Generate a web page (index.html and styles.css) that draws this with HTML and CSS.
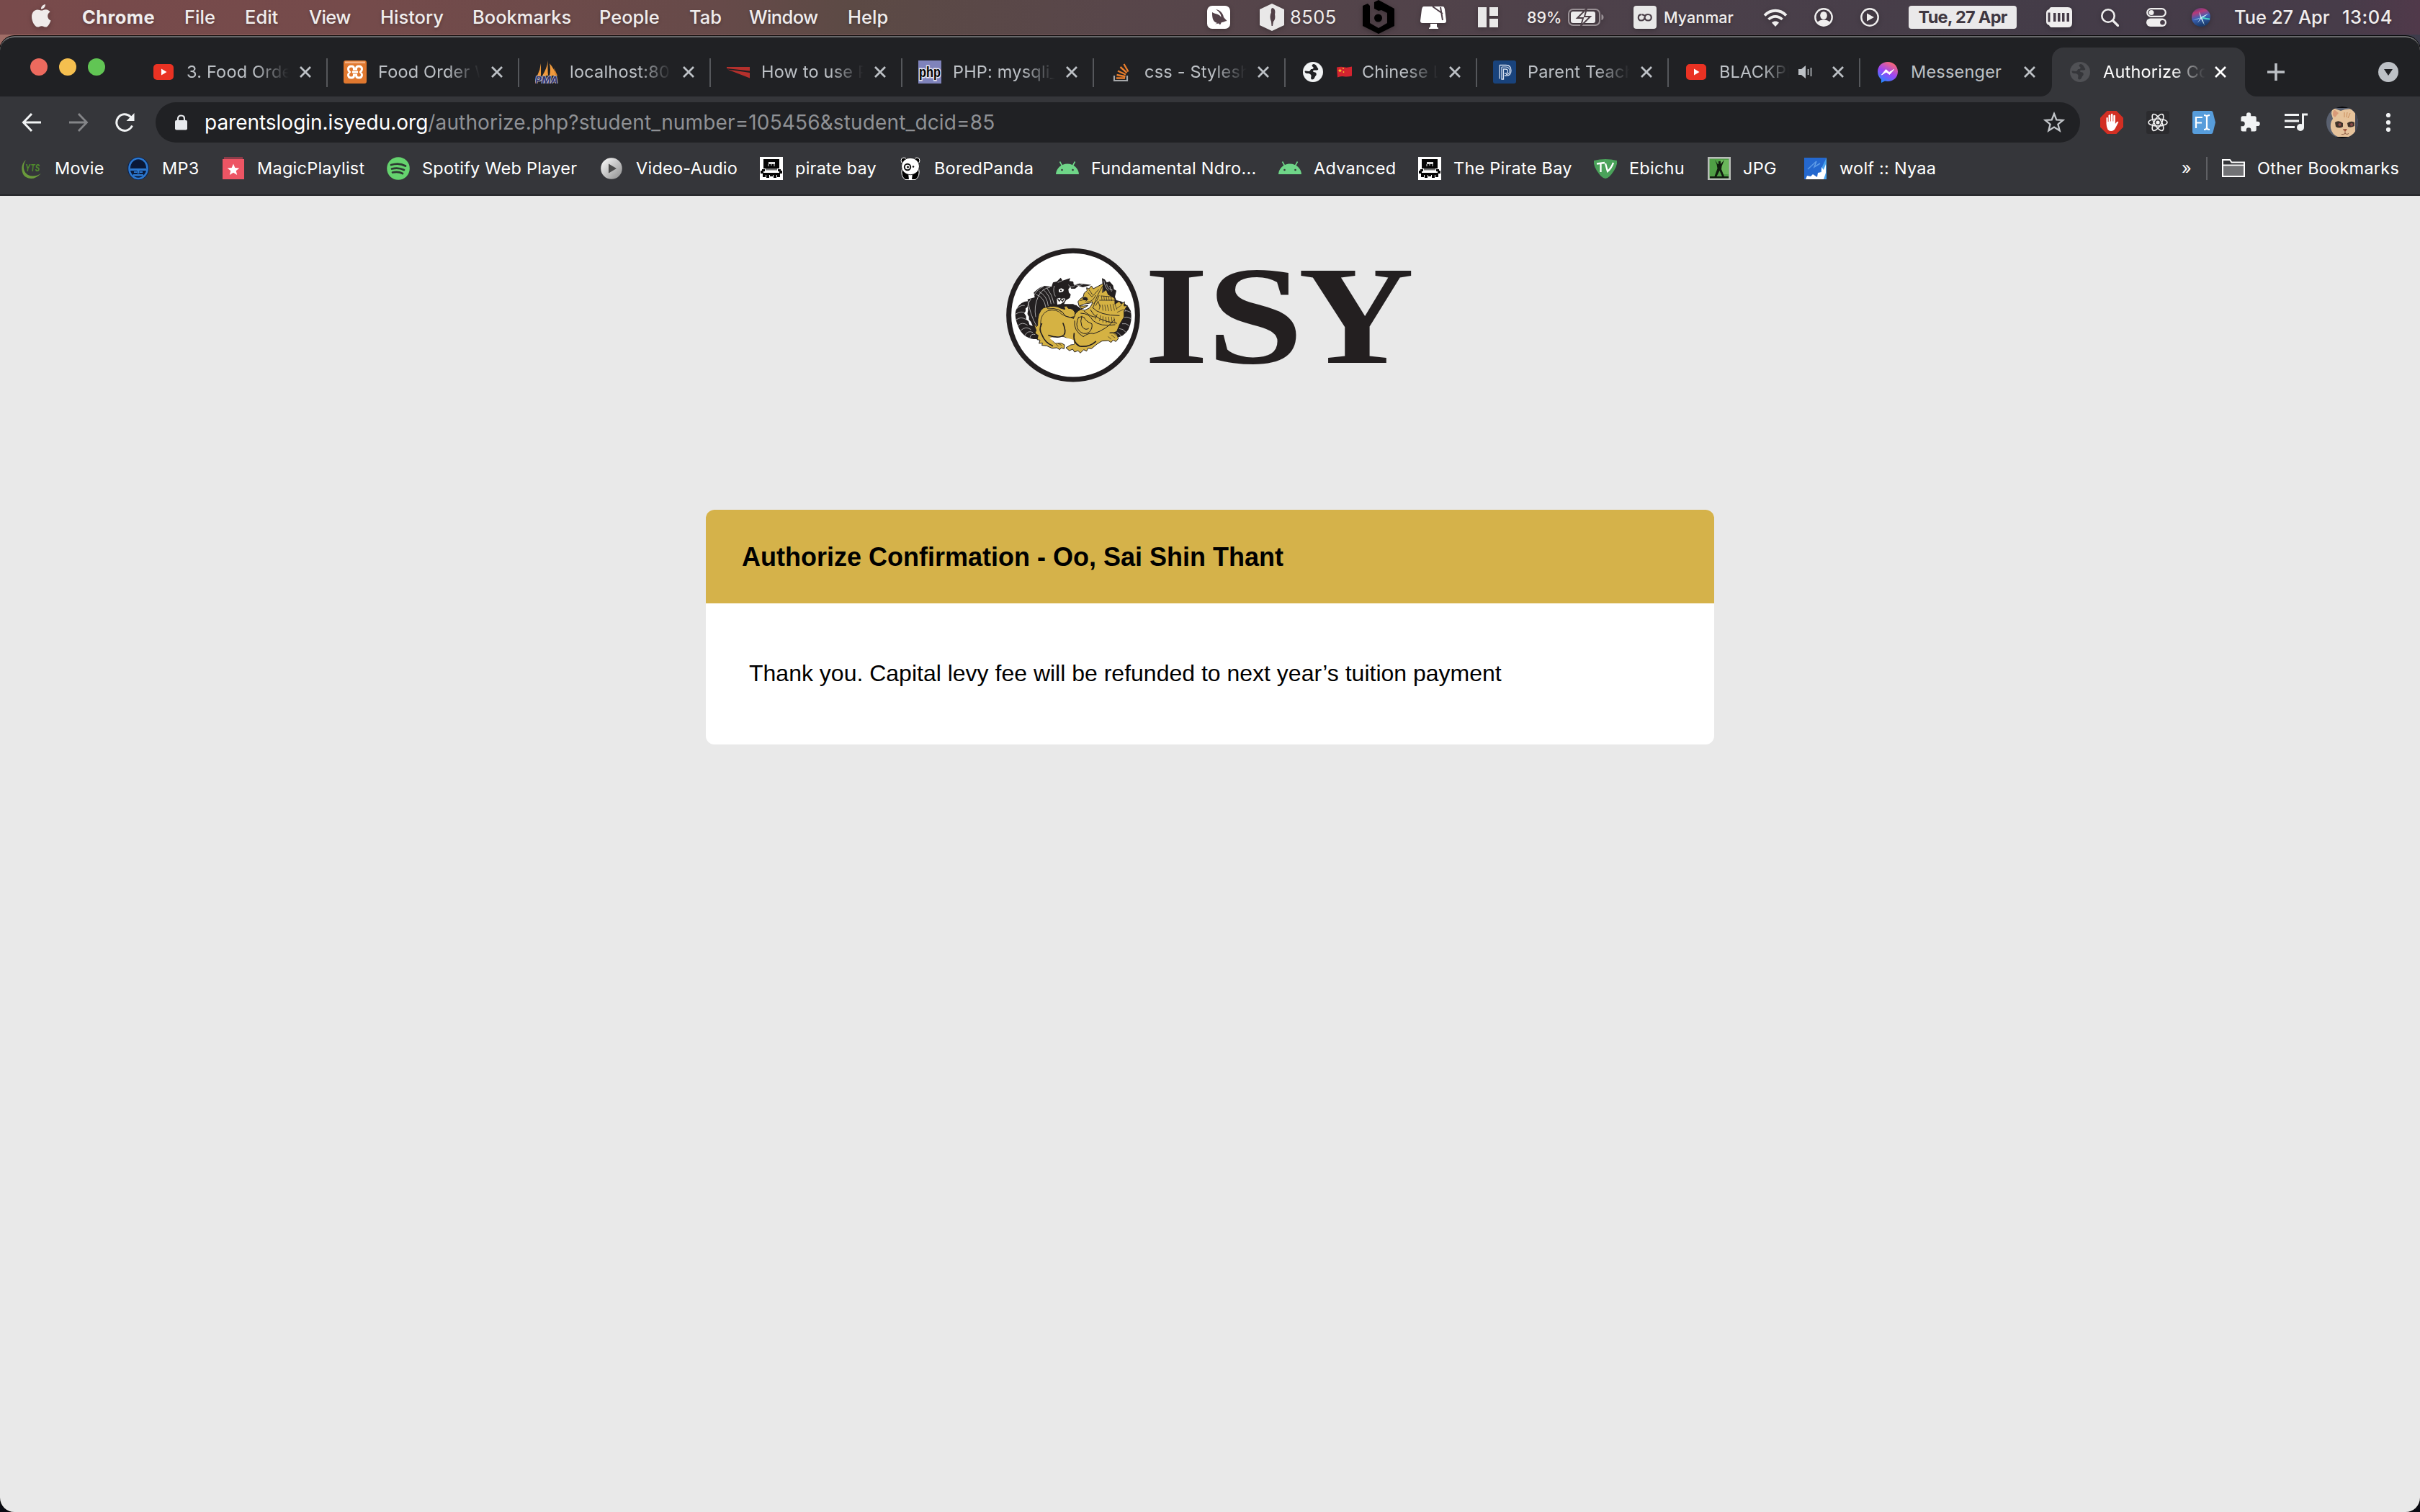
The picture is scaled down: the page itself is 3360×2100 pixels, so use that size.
FILE: index.html
```
<!DOCTYPE html>
<html lang="en">
<head>
<meta charset="utf-8">
<title>Authorize Confirmation</title>
<link rel="stylesheet" href="styles.css">
</head>
<body>
<svg class="defs" width="0" height="0" aria-hidden="true">
  <symbol id="close" viewBox="0 0 16 16"><path d="M1 1 15 15M15 1 1 15" fill="none" stroke="currentColor" stroke-width="2.8"/></symbol>
  <symbol id="youtube" viewBox="0 0 32 32"><rect x="2" y="5" width="28" height="22" rx="5" fill="#ea3223"/><path d="M13 11.500 20.500 16 13 20.500z" fill="#fff"/></symbol>
  <symbol id="globe" viewBox="0 0 32 32"><circle cx="16" cy="16" r="14" fill="currentColor"/><path d="M17 5c-3 .5-3 3-1 4 1.500 1 .5 3-2 3-2 0-1 2.500-3.500 3-2 .3-4.500-1-6 0 0 2 1.500 3 3.500 3 2 0 5 .5 5.500 3 .3 2-1.500 4 1 5.500 4 0 3.500-3.500 5-5 2-1.500 1.500-4.500-.5-5-1.500-.5-3-.5-3-2 0-1.500 3.500-1 5.500-1 1 0 2.500-1 1.500-2.500C21.500 9 20 5 17 5z" fill="var(--hole)"/></symbol>
  <symbol id="pirate" viewBox="0 0 32 32"><path fill="#fff" d="M0 0h32v32H0z"/><path d="M5 3h22v13H5zM3 17h4v3H3zM25 17h4v3h-4zM1 19h4v4H1zM27 19h4v4h-4zM4 22h24v3H4zM9 25h4v4H9zM19 25h4v4h-4zM4 25h4v3H4zM24 25h4v3h-4zM14 25h4v2h-4z" fill="#050505"/><path d="M12 7h9v3h-9z" fill="#ddd"/><path d="M11 10h2v3h-2zM15 10h2v2h-2zM19 10h2v3h-2zM8 16h16v2.500H8z" fill="#777"/></symbol>
  <symbol id="android" viewBox="0 0 32 32"><path d="M0 24C0.500 16 7 9.500 16 9.500S31.500 16 32 24z" fill="#6fd688"/><path d="M8.500 12 5.500 6.500M23.500 12l3-5.500" stroke="#6fd688" stroke-width="1.600"/><circle cx="8.500" cy="18" r="1.300" fill="#35363a"/><circle cx="23.500" cy="18" r="1.300" fill="#35363a"/></symbol>
</svg>

<header class="menubar">
  <nav class="menus">
    <svg class="apple" width="27" height="32" viewBox="0 0 27 32"><path d="M19 0c.2 3.700-2.900 6.700-6 6.600C12.700 3.300 15.700.2 19 0zM13.800 8.600c1.500 0 3-1.500 6-1.400 2.400.1 4.500 1.300 5.800 3.200-5 3-4.200 9.900.9 12-1.200 3.700-4 9-6.900 9.200-2.200.1-3-1.400-5.700-1.400s-3.600 1.300-5.700 1.400C4.700 31.700 0 24 0 17.200 0 11 4 7.500 8 7.400c2.400 0 4.300 1.200 5.800 1.200z" fill="#efebea"/></svg>
    <b>Chrome</b><span>File</span><span>Edit</span><span class="tight">View</span><span>History</span><span>Bookmarks</span><span>People</span><span>Tab</span><span class="tight">Window</span><span>Help</span>
  </nav>
  <div class="status">
    <svg width="32" height="32" viewBox="0 0 32 32"><rect width="32" height="32" rx="7" fill="#fff"/><path d="M7 9c0 6 0 13 7 15l-3 1.500 5-1 2 2 2-3.500c3 0 4-1.500 7.500-2L23 16c-1-6-5-10-11-11 5 3 7.500 7 7.500 11C17 11 12 12 7 9z" fill="#54424a"/></svg>
    <svg width="34" height="38" viewBox="0 0 34 38"><path d="M17 0 34 8v22l-17 8L0 30V8z" fill="#e9e8e8"/><path d="M18 6c3 1 4 4 3 9 1 5 0 8-2 10l-1 6h-1.500L16 25c-2-4-2-9 0-13-.5-3 0-6 2-6z" fill="#503f46"/></svg>
    <span class="mem">8505</span>
    <svg width="44" height="48" viewBox="0 0 44 48"><path d="M0 8 7 5l3 3v24l12 7 12-7V18l-8-4-4 1-6-3V3l6-3 22 12v24L22 47 0 36z"/><circle cx="21.500" cy="25" r="5.500"/></svg>
    <svg width="36" height="31" viewBox="0 0 36 31"><path d="M5 0h26c2 0 2 1 3 4l2 16c0 2-1 3-3 3H3c-2 0-3-1-3-3L2 4c1-3 1-4 3-4zM14 24h9v4l2 2v1H12v-1l2-2z" fill="#fff"/><path d="m17 0 14 10M28 1l3 18" fill="none" stroke="#50414a" stroke-width="2"/></svg>
    <svg width="28" height="28" viewBox="0 0 28 28"><path d="M0 0h12v28H0zM16 0h12v12H16zM16 16h12v12H16z" fill="#e9e8e8"/></svg>
    <span class="small">89%</span>
    <svg width="51" height="24" viewBox="0 0 51 24"><rect x="1" y="1" width="43" height="22" rx="6" fill="none" stroke="#9a9196" stroke-width="2"/><path d="M46.500 8c4 1 4 7 0 8z" fill="#9a9196"/><rect x="4" y="4" width="34" height="16" rx="3" fill="#ecebec"/><path d="M26 0 13 13h8l-3 11 13-13h-8z" fill="#ecebec" stroke="#4d4048" stroke-width="2"/></svg>
    <svg width="32" height="32" viewBox="0 0 32 32"><rect width="32" height="32" rx="4" fill="#e9e8e8"/><path d="M11 12.500C6 11 5 20.500 10.500 20.500c3.500 0 5-2 5-5 0 3 2 5 5 5C26 20.500 26.500 12 20 12c-2 0-3.500.8-4 2.500-1-1.500-2.500-2.500-4.500-2" fill="none" stroke="#4a3e47" stroke-width="2.200"/></svg>
    <span class="small">Myanmar</span>
    <svg width="34" height="25" viewBox="0 0 34 25"><path d="M2 9.500c8.500-9 21.500-9 30 0M7.500 15c5.500-5.500 13.500-5.500 19 0" fill="none" stroke="#efeeee" stroke-width="3.800"/><path d="M12 19.500c3-2.600 7-2.600 10 0L17 25z" fill="#efeeee"/></svg>
    <svg width="26" height="26" viewBox="0 0 26 26"><circle cx="13" cy="13" r="11.700" fill="none" stroke="#efeeee" stroke-width="2.400"/><ellipse cx="13" cy="10.500" rx="4.800" ry="5.500" fill="#efeeee"/><path d="M4.500 20c2-3 5-3.500 8.500-3.500s6.500.5 8.500 3.500c-4 5.500-13 5.500-17 0z" fill="#efeeee"/></svg>
    <svg width="26" height="26" viewBox="0 0 26 26"><circle cx="13" cy="13" r="11.700" fill="none" stroke="#efeeee" stroke-width="2.400"/><path d="M9 7.500 19 13 9 18.500z" fill="#efeeee"/></svg>
    <b class="datebadge">Tue, 27 Apr</b>
    <svg width="36" height="28" viewBox="0 0 36 28"><path d="M7 0h23q6 0 6 6v16q0 6-6 6H7q-2 0-3-3-4-1-4-5V8q0-4 4-5 1-3 3-3z" fill="#efeeee"/><path d="M2.500 7.500h3v13h-3zM10 8h3.500v12H10zM16 8h3.500v12H16zM22 8h3.500v12H22zM28.500 8H32v12h-3.500z" fill="#463c48"/></svg>
    <svg width="25" height="25" viewBox="0 0 25 25"><circle cx="10" cy="10" r="8.700" fill="none" stroke="#efeeee" stroke-width="2.600"/><path d="m16.500 16.500 7 7" stroke="#efeeee" stroke-width="3.200" stroke-linecap="round"/></svg>
    <svg width="28" height="26" viewBox="0 0 28 26"><rect x="1.200" y="1.200" width="25.600" height="10.600" rx="5.300" fill="none" stroke="#efeeee" stroke-width="2.200"/><circle cx="7" cy="6.500" r="3.500" fill="#efeeee"/><rect y="14.500" width="28" height="11.500" rx="5.700" fill="#efeeee"/><circle cx="22.500" cy="20.200" r="3.300" fill="#463c48"/></svg>
    <svg width="26" height="26" viewBox="0 0 26 26"><defs><linearGradient id="siri" x1="0" y1="0" x2=".3" y2="1"><stop offset="0" stop-color="#463a7a"/><stop offset=".3" stop-color="#b83a78"/><stop offset=".6" stop-color="#3b63b8"/><stop offset="1" stop-color="#1b3c6c"/></linearGradient></defs><circle cx="13" cy="13" r="13" fill="url(#siri)"/><path d="M2 17q8-1 11-4.500L23 8q-5 4.500-8.500 5.500L18 24q-4-6-5-9l-5 6q3-5 4-8-1-4-2-8 3 5 3.500 8" fill="#dff" opacity=".85"/><path d="M15 13.500q5 2 10 2" stroke="#4ad6c8" stroke-width="2" fill="none"/></svg>
    <span>Tue 27 Apr</span><span class="time">13:04</span>
  </div>
</header>

<div class="window">
  <div class="tabstrip">
    <div class="lights"><i class="red"></i><i class="yellow"></i><i class="green"></i></div>
    <div class="tab"><svg class="fav"><use href="#youtube"/></svg><span class="title">3. Food Order</span><svg class="x"><use href="#close"/></svg></div>
    <div class="tab"><svg class="fav" viewBox="0 0 32 32"><rect width="32" height="32" rx="3" fill="#e0782f"/><path d="M2 1.500h28V4H2z" fill="#f4b183"/><path d="M14.500 13.500v-2c0-3-2-3.500-3.500-3.500-3 0-4.500 1.500-4.500 4 0 2 1 3 2 4-1 1-2 2-2 4 0 2.500 1.500 4 4.500 4 1.500 0 3.500-.5 3.500-3.500v-2M17.500 13.500v-2c0-3 2-3.500 3.500-3.500 3 0 4.500 1.500 4.500 4 0 2-1 3-2 4 1 1 2 2 2 4 0 2.500-1.500 4-4.500 4-1.500 0-3.500-.5-3.500-3.500v-2M12 16h8" fill="none" stroke="#fff" stroke-width="3"/></svg><span class="title">Food Order W</span><svg class="x"><use href="#close"/></svg></div>
    <div class="tab"><svg class="fav" viewBox="0 0 32 32"><path d="M8 4v17H3Q7 13 8 4zM18 0q-1 10 0 21h-8Q16 12 18 0zM20 4q7 8 9 17h-9q2-8 0-17z" fill="#ef9a3d"/><path d="m26 10 5 11h-3z" fill="#d9852b"/><text x="0" y="31.500" textLength="32" lengthAdjust="spacingAndGlyphs" class="pma">PMA</text></svg><span class="title">localhost:80 /</span><svg class="x"><use href="#close"/></svg></div>
    <div class="tab"><svg class="fav" viewBox="0 0 32 32"><path d="M0 9h32v5.500L0 11zM1 12.500 32 17v7.500z" fill="#b5302c"/></svg><span class="title">How to use P</span><svg class="x"><use href="#close"/></svg></div>
    <div class="tab"><svg class="fav" viewBox="0 0 32 32"><path fill="#7f83bb" d="M0 0h32v32H0z"/><text x="1" y="23" textLength="30" lengthAdjust="spacingAndGlyphs" class="php">php</text></svg><span class="title">PHP: mysqli_q</span><svg class="x"><use href="#close"/></svg></div>
    <div class="tab"><svg class="fav" viewBox="0 0 32 32"><path d="M6 21v7h18v-7" fill="none" stroke="#a5a8ab" stroke-width="2.200"/><path d="M9 24.500h12M9.500 20l12 2.200M11 14.500l11 5M14.500 9l9 8.200M19.500 5l6 10.500" stroke="#e87d2c" stroke-width="2.400"/></svg><span class="title">css - Stylesh</span><svg class="x"><use href="#close"/></svg></div>
    <div class="tab"><svg class="fav bright"><use href="#globe"/></svg><span class="title"><svg class="flag" width="21" height="16" viewBox="0 0 21 16"><path d="M0 1.500Q6 0 10 1.200T21 .5v13q-6 1.500-11 .7T1 15.500z" fill="#d3232f"/><path d="m4.500 3 .8 2h2L5.700 6.300l.6 2-1.800-1.200-1.800 1.200.6-2L1.700 5h2z" fill="#f7c52d"/><circle cx="9" cy="3" r=".9" fill="#f7c52d"/><circle cx="9.500" cy="8" r=".9" fill="#f7c52d"/></svg>Chinese L</span><svg class="x"><use href="#close"/></svg></div>
    <div class="tab"><svg class="fav" viewBox="0 0 32 32"><rect width="32" height="32" rx="3" fill="#19437c"/><path d="M9 6.500v19M12 9v17h2.500V12H17q3.500 0 3.500 3T17 18h-1M9 6.500h9q7 0 7 7.500T18 21h-2" fill="none" stroke="#d5dff0" stroke-width="1.300"/><path d="M12 9h6q5 .5 5 5.500t-5 5" fill="none" stroke="#d5dff0" stroke-width="1.100"/></svg><span class="title">Parent Teach</span><svg class="x"><use href="#close"/></svg></div>
    <div class="tab audible"><svg class="fav"><use href="#youtube"/></svg><span class="title">BLACKPINK</span><svg class="speaker" width="20" height="20" viewBox="0 0 20 20"><path d="M0 6h4l6-5v18l-6-5H0z" fill="#bdc1c6"/><path d="M13.500 6v8M17.500 4v12" stroke="#bdc1c6" stroke-width="1.600"/></svg><svg class="x"><use href="#close"/></svg></div>
    <div class="tab last"><svg class="fav" viewBox="0 0 32 32"><defs><linearGradient id="msg" x1=".2" y1="1" x2=".7" y2="0"><stop offset="0" stop-color="#1b8dff"/><stop offset=".5" stop-color="#9a45f7"/><stop offset="1" stop-color="#ff6a6f"/></linearGradient></defs><path d="M16 2c8 0 14 5.800 14 13.600S24 29 16 29c-1.500 0-3-.2-4-.5L7 31v-4.500c-3-2.700-5-6-5-10.900C2 7.800 8 2 16 2z" fill="url(#msg)"/><path d="m7.500 20 6-7.500 4.500 4 6.500-4-6 7-4.500-3.500z" fill="#fff" stroke="#fff"/></svg><span class="title">Messenger</span><svg class="x"><use href="#close"/></svg></div>
    <div class="tab active"><svg class="fav dim"><use href="#globe"/></svg><span class="title">Authorize Con</span><svg class="x"><use href="#close"/></svg></div>
    <svg class="plus" width="24" height="24" viewBox="0 0 24 24"><path d="M12 0v24M0 12h24" stroke="#bdc1c6" stroke-width="3.600"/></svg>
    <svg class="tabmenu" width="28" height="28" viewBox="0 0 28 28"><circle cx="14" cy="14" r="14" fill="#bdc1c6"/><path d="M8 10h12l-6 9z" fill="#202124"/></svg>
  </div>

  <div class="toolbar">
    <svg width="28" height="28" viewBox="0 0 28 28"><path d="M27 14H3M14 2 2.500 14 14 26" fill="none" stroke="#f1f3f4" stroke-width="3"/></svg>
    <svg width="28" height="28" viewBox="0 0 28 28"><path d="M1 14h24M14 2l11.500 12L14 26" fill="none" stroke="#848588" stroke-width="2.800"/></svg>
    <svg width="28" height="28" viewBox="0 0 28 28"><path d="M24.500 18.500A11.300 11.300 0 1 1 22 6l2 2.500" fill="none" stroke="#f1f3f4" stroke-width="3"/><path d="M27.500 1v11h-11z" fill="#f1f3f4"/></svg>
    <div class="omnibox">
      <svg width="17" height="22" viewBox="0 0 17 22"><path d="M4 9V6q0-4.500 4.500-4.500T13 6v3" fill="none" stroke="#e8eaed" stroke-width="2.200"/><rect y="8" width="17" height="13.500" rx="2" fill="#e8eaed"/></svg>
      <span class="url">parentslogin.isyedu.org<span class="path">/authorize.php?student_number=105456&amp;student_dcid=85</span></span>
      <svg width="30" height="30" viewBox="0 0 30 30"><path d="m15 3 3.300 8.300 9 .6-6.900 5.700 2.300 8.800L15 21.500l-7.700 4.900 2.300-8.800-6.900-5.700 9-.6z" fill="none" stroke="#c4c7cb" stroke-width="2.300"/></svg>
    </div>
    <svg width="32" height="32" viewBox="0 0 32 32"><path d="M9.500 0h13L32 9.500v13L22.500 32h-13L0 22.500v-13z" fill="#d22f23"/><path d="M8.500 18V9.500q1.200-1.200 2.200 0V15h.8V6q1.300-1.500 2.600 0v8.500h.8V4.500q1.300-1.500 2.600 0v10h.8V6.500q1.300-1.500 2.600 0V18l2-2.500q1.700-1.300 2.500 0L21 24q-2 4-6 4-6 0-6.500-10z" fill="#fff"/></svg>
    <svg width="32" height="32" viewBox="0 0 32 32"><rect width="32" height="32" rx="3" fill="#2b2b2e"/><g fill="none" stroke="#f1f1f1" stroke-width="1.600"><ellipse cx="16" cy="16" rx="13" ry="5"/><ellipse cx="16" cy="16" rx="13" ry="5" transform="rotate(60 16 16)"/><ellipse cx="16" cy="16" rx="13" ry="5" transform="rotate(120 16 16)"/></g><circle cx="16" cy="16" r="2.600" fill="#f1f1f1"/></svg>
    <svg width="32" height="32" viewBox="0 0 32 32"><path d="M3 0h23q2 0 2.500 2L32 16l-3.500 14q-.5 2-2.500 2H3q-3 0-3-3V3q0-3 3-3z" fill="#579ddb"/><path d="M5 24V9h9M5 16.500h8M16 6q4 0 4 3v14q0 3-4 3M24 6q-4 0-4 3M24 26q-4 0-4-3" fill="none" stroke="#fff" stroke-width="2.200"/></svg>
    <svg width="30" height="30" viewBox="0 0 24 24"><path d="M20.500 11H19V7a2 2 0 0 0-2-2h-4V3.500a2.500 2.500 0 0 0-5 0V5H4a2 2 0 0 0-2 2v3.800h1.500a2.700 2.700 0 0 1 0 5.400H2V20a2 2 0 0 0 2 2h3.800v-1.500a2.700 2.700 0 0 1 5.400 0V22H17a2 2 0 0 0 2-2v-4h1.500a2.500 2.500 0 0 0 0-5z" fill="#f1f3f4"/></svg>
    <svg width="32" height="26" viewBox="0 0 32 26"><path d="M0 2.500h20M0 11h20M0 19.500h14M25.500 20V2H32" fill="none" stroke="#f1f3f4" stroke-width="3"/><circle cx="22" cy="20" r="5" fill="#f1f3f4"/></svg>
    <svg width="44" height="44" viewBox="0 0 44 44"><defs><clipPath id="av"><circle cx="22" cy="22" r="22"/></clipPath></defs><g clip-path="url(#av)"><path fill="#59606f" d="M0 0h44v44H0z"/><path d="M0 0h44v2H0z" fill="#08080a"/><path d="M7 10Q7 2 12 3l8 3q8-4 20-2v38H16q-8-3-10-12-1-8 3-13z" fill="#e6c39b"/><path d="M9 12q0-8 3-7l5 4-5 6z" fill="#d99a78"/><path d="M40 5v37q5-10 4-20T40 5z" fill="#424655"/><path d="M0 42h44v2H0z" fill="#08080a"/><path d="M25 8v7m4-7-1 7m5-6-3 7" stroke="#c98d5c" stroke-width="1"/><path d="M12 22q5-4 11 1v5q-5 3-10 0zM29 23q5-4 10-1v5q-5 3-9 1z" fill="#40332a"/><circle cx="18.500" cy="25" r="2" fill="#8a4b48"/><circle cx="35" cy="25" r="2" fill="#8a4b48"/><path d="m23 32 5-.5-2 3v3q-3 2-5 1m5-1q3 2 5 0" fill="none" stroke="#8a5b45"/><path d="m23 32 6-.5-3 3z" fill="#a3543c"/></g></svg>
    <svg width="8" height="26" viewBox="0 0 8 26"><circle cx="4" cy="3" r="3.100" fill="#f1f3f4"/><circle cx="4" cy="13" r="3.100" fill="#f1f3f4"/><circle cx="4" cy="23" r="3.100" fill="#f1f3f4"/></svg>
  </div>

  <div class="bookmarks">
    <div class="mark"><svg viewBox="0 0 32 32"><path d="M8 4C0 10 1 24 8 28q10 6 21-5-10 6-18 2C4 21 3 12 8 4z" fill="#6a9a3b"/><text x="7" y="20" textLength="20" lengthAdjust="spacingAndGlyphs" class="yts">YTS</text></svg>Movie</div>
    <div class="mark"><svg viewBox="0 0 32 32"><ellipse cx="16" cy="16" rx="15" ry="16" fill="#0c2450"/><ellipse cx="16" cy="16" rx="12.500" ry="14" fill="#0a1c3e" stroke="#2c78cf" stroke-width="2.600"/><path d="M5 16h22v3H5zM14.500 17h3v6h-3zM9 24h14v2.500H9zM10 20h4v2h-4zM18 20h4v2h-4z" fill="#2c78cf"/><path d="M7 8q9-6 18 0v7H7z" fill="#0a1836"/></svg>MP3</div>
    <div class="mark"><svg viewBox="0 0 32 32"><path d="M3 0h26v3H3z" fill="#8c3c49"/><path d="M1 3h30v28H1z" fill="#ed5564"/><path d="m16 9.500 2.300 5.500 6 .4-4.600 3.800 1.500 5.800-5.200-3.200-5.200 3.200 1.500-5.800-4.600-3.800 6-.4z" fill="#fff"/></svg>MagicPlaylist</div>
    <div class="mark"><svg viewBox="0 0 32 32"><circle cx="16" cy="16" r="15.800" fill="#65d36e"/><path d="M6 11q11-3.500 20 1.500M7 16.500q9-2.500 17 1.500M8 21.500q8-2 14 1.500" fill="none" stroke="#2e3a33" stroke-width="2.700" stroke-linecap="round"/></svg>Spotify Web Player</div>
    <div class="mark"><svg viewBox="0 0 32 32"><defs><linearGradient id="va" x2="1" y2="1"><stop offset="0" stop-color="#fff"/><stop offset="1" stop-color="#8b8b8b"/></linearGradient></defs><circle cx="15" cy="16" r="14.800" fill="url(#va)"/><path d="M11 9.500 22 16l-11 6.500z" fill="#4a4a4a"/></svg>Video-Audio</div>
    <div class="mark"><svg><use href="#pirate"/></svg>pirate bay</div>
    <div class="mark"><svg viewBox="0 0 32 32"><circle cx="7" cy="5" r="4" fill="#000" stroke="#fff"/><circle cx="25" cy="5" r="4" fill="#000" stroke="#fff"/><path d="M4.500 16h23Q30 27 23 31.500H9Q2 27 4.500 16z" fill="#000" stroke="#fff"/><path d="M13 22h6l-1 9.500h-4z" fill="#fff"/><ellipse cx="16" cy="13" rx="12.500" ry="11.800" fill="#fff" stroke="#000" stroke-width=".8"/><circle cx="12" cy="14" r="4.200" fill="none" stroke="#111" stroke-width="2"/><circle cx="12.500" cy="14" r="1.500" fill="#111"/><circle cx="20" cy="13.500" r="1.300" fill="#111"/></svg>BoredPanda</div>
    <div class="mark"><svg><use href="#android"/></svg>Fundamental Ndro...</div>
    <div class="mark"><svg><use href="#android"/></svg>Advanced</div>
    <div class="mark"><svg><use href="#pirate"/></svg>The Pirate Bay</div>
    <div class="mark"><svg viewBox="0 0 32 32"><path d="M0 5q16-4 32 0 1 6-4 14-7 11-12 11T4 19Q-1 11 0 5z" fill="#4aa25a"/><path d="M4 9.500 15 8M9.500 9v12M16 9l3 11q5-4 8-12" fill="none" stroke="#fff" stroke-width="2.300"/></svg>Ebichu</div>
    <div class="mark"><svg viewBox="0 0 32 32"><path fill="#b9bdb9" d="M0 0h32v32H0z"/><path fill="#4f9f45" d="M2.500 2.500h27v27h-27z"/><path fill="#86cd70" d="M18 4h11v20H18z" opacity=".5"/><path d="m10 4 4 6h1V6h3v4l5-6-3.500 9-.5 4 4 10h-3l-3.500-8-4 8h-3l4-11-1-6zM3 27h26v2.500H3z" fill="#101c0e"/></svg>JPG</div>
    <div class="mark"><svg viewBox="0 0 32 32"><path fill="#2468cf" d="M0 1h31v30H0z"/><path d="M31 1v30H18l4-9q3-10 9-21z" fill="#49a3ef"/><path d="m2 31 2-5 5 1 3-3 6 4 1-6 5-1v-7l3 4 3-8v12l-3 9z" fill="#fff"/><path d="m5 17 12-11-3 8 8-5" fill="none" stroke="#5d9be6" stroke-width="1.500"/></svg>wolf :: Nyaa</div>
    <span class="more">»</span>
    <i class="divider"></i>
    <div class="mark other"><svg viewBox="0 0 32 32"><path d="M1 27V4h10l2.500 3.500H31V27z" fill="none" stroke="#fff" stroke-width="2"/><path d="M2 13h28v13H2z" fill="#717275"/><path d="M1 11.500h30" stroke="#fff" stroke-width="2"/></svg>Other Bookmarks</div>
  </div>

  <main class="page">
    <svg class="logo" width="580" height="205" viewBox="0 0 580 205" role="img" aria-label="ISY">
      <g transform="scale(.33333)">
        <circle cx="300" cy="308" r="268" fill="#fff" stroke="#231f20" stroke-width="21"/>
        <g fill="#231f20">
          <path d="M156 408Q100 412 76 366 50 312 64 282 82 250 112 250L110 242 140 234 136 214 152 200 160 194 180 186 210 190 216 172 232 168 248 152 256 164 288 154 284 166 300 168 304 182 326 176 376 182 340 192 322 186 308 198 292 198 288 190 280 200 282 214 290 222 286 236 270 246 262 262 300 262 334 282 338 300 310 340 200 380z"/>
          <path d="M420 154 432 160 440 172 452 168 466 184 470 200 480 206 474 232 480 246Q520 250 540 290 548 330 530 368 510 400 476 402L430 330 424 200z"/>
        </g>
        <g fill="none" stroke="#fff" stroke-width="1.800">
          <path d="M112 250q10 60 36 104M64 282q20-18 34-14M60 304q26-16 40-4M62 328q20-16 42-2M70 352q18-18 40-2M82 372q20-20 42-4M98 394q12-24 34-14M120 403q4-20 22-14"/>
          <path d="M124 240q-20 30-14 66M146 222q34 12 40 54M158 210q34 18 38 60M174 200q30 26 34 62M190 194q24 30 30 66M204 192q-34 4-50 40-18 40-10 84M178 188q-32 14-44 44"/>
          <path d="M486 256q22 10 32 34M508 292q16-6 32 4M508 318q18-6 32 4M504 344q16-4 30 8M492 364q16 0 28 16M482 380q12 4 18 16M428 164q4 30 20 42M440 178q0 20 24 26M452 186l8 24"/>
          <path d="M262 158q-10 10-26 14M280 182q14 18 30 0M300 176q18 14 40 4M222 186q-8 22 4 44"/>
        </g>
        <path d="m112 272-10 8 0 12-6 8 8 12 0 14 10 8 4 14 14 6-8-18-8-10 0-12-8-12 4-12z" fill="#fff"/>
        <path d="m240 202 10-6 12 6-4 8-14 4-4-4zM232 240l10-4 8 4 12-2 6 2-6 12-14 10-14 2z" fill="#fff"/>
        <circle cx="249" cy="205" r="3.500" fill="#231f20"/>
        <path d="m236 240 6 10 6-8 8 8 6-10M262 268l50 0 22 18" fill="none" stroke="#231f20" stroke-width="4"/>
        <g fill="#d5b243" stroke="#231f20" stroke-width="3" stroke-linejoin="round">
          <path d="M136 344 148 356 152 350Q150 296 176 278 214 262 240 284 262 306 290 318L302 322Q304 296 336 282L324 268 320 252 330 240 342 232 346 216 358 206 356 194 366 198 376 186 384 198 426 176 422 214 438 202 446 222 464 232 474 240 474 262 492 250 500 262 514 252 512 270 526 268 512 290 512 316 494 346 482 376 468 382 452 382Q478 378 484 392L488 406 478 418 466 412 458 422 446 414 420 416Q400 426 376 448L362 446 356 458 344 452 330 466 320 456 306 462 298 450 284 456 270 444 290 432 304 430 302 418Q284 410 262 398 240 402 212 400 208 410 224 424L250 424 264 432 262 448 250 444 244 452 232 444 212 446 190 436 170 434 172 424 158 426 162 412 150 410 154 392 140 384 146 372z"/>
          <path d="M196 282Q246 274 268 312 290 322 306 314L308 298Q298 278 280 280L272 270 262 272 266 284 250 280Q222 264 190 276z"/>
        </g>
        <path d="m202 404 20-8 30 2 40 10 10 4 2 18-40-2-14-6-24 2z" fill="#fff"/>
        <path d="m326 270 20-8 24-4 10-6-2 12-10 14-20 10-16-4 18-8 12-8-18 2z" fill="#fff" stroke="#231f20" stroke-width="3"/>
        <g fill="none" stroke="#231f20" stroke-width="3" stroke-linecap="round">
          <path d="M164 346q0-44 30-56 38-10 58 14 14 8 34 14" stroke-width="2.500"/>
          <path d="M258 342q14 34 4 48-20 18-64 2M168 344q-12 24 2 46 12 32 44 46M304 384q-6 40 24 54 40 4 66-20" stroke-width="5"/>
          <path d="M170 344l-6 14M306 332q-6 40 36 66 20-16 40-14M322 318q-14 30 0 52 20 24 44 10 16-16 12-36-26-10-32-26-10-8-24 0M336 312q-8 22 0 42 14 20 28 10M332 300q34 0 50 30 30 28 92 18M346 292q30 26 50 24M372 286q20 46 110 56M380 276q30 34 112 34M384 386q60-20 88-60"/>
          <path d="M384 274q14-50 42-92M362 214l16 18 28-30M366 202l14 20M346 238l16 4-10 8M330 248l12-4M356 254q14 2 28-12l10-16M386 260l14-14 8-20M394 268l10-18 8 24M410 246l66 0M416 228l50 4" stroke-width="2.500"/>
          <path d="M418 230l2 14m8-14 2 14m8-14 2 16m8-14 2 14m8-12 2 14M408 284l6-18m10 22-2-22m14 24-4-24m16 24-6-24m18 24-6-26m18 24-6-26m16 22-8-22M392 324l8-20m10 28 4-22m10 28 0-24m14 26-2-24m14 24-2-24m14 24-2-24m14 22-4-20M482 280l20-14M484 296l26-12M446 398l12 10m2-16 14 10m-8-20 16 12M228 428l10 10m0-12 14 8" stroke-width="2"/>
        </g>
        <path d="m338 236 12-4 10 4-2 10-14 0z" fill="#231f20"/>
        <path d="M130 352l14 34M140 374l12 30" fill="none" stroke="#231f20" stroke-width="2"/>
      </g>
      <g class="logotext">
        <text transform="translate(199 169) scale(1.175 1)">I</text>
        <text transform="translate(285.600 169) scale(1.244 1)">S</text>
        <text transform="translate(412.600 169) scale(1.149 1)">Y</text>
      </g>
    </svg>
    <section class="card">
      <h1>Authorize Confirmation - Oo, Sai Shin Thant</h1>
      <p>Thank you. Capital levy fee will be refunded to next year’s tuition payment</p>
    </section>
  </main>
</div>
</body>
</html>
```
FILE: styles.css
```
* { box-sizing: border-box; }
svg { display: block; flex: none; }
.defs { position: absolute; }

body {
  margin: 0;
  height: 2100px;
  overflow: hidden;
  display: flex;
  flex-direction: column;
  background: linear-gradient(#0000 50%, #0b0c14 50%), linear-gradient(90deg, #a06d66, #3d3c4b);
  font-family: Inter, "Liberation Sans", sans-serif;
  white-space: nowrap;
}

/* macOS menu bar */
.menubar {
  height: 48px;
  flex: none;
  display: flex;
  align-items: center;
  background: linear-gradient(90deg, #784a4b 0, #754b4b 500px, #664a49 1000px, #5c4a45 1180px, #58464a 1550px, #54444a 1800px, #4b404a 2350px, #443c48 2850px, #473c49 3250px, #50394a 100%);
  color: #f0eded;
  font-size: 25.5px;
  font-weight: 500;
  text-shadow: 0 2px 4px rgb(0 0 0 / .25);
}
.menubar svg { filter: drop-shadow(0 2px 3px rgb(0 0 0 / .25)); }
.menubar span, .menus b { padding-bottom: 2px; }
.menus {
  width: 1676px;
  display: grid;
  grid-template-columns: 114px 142px 84px 89px 99px 128px 176px 125px 83px 137px 1fr;
  align-items: center;
}
.menus b { letter-spacing: .4px; }
.menus .tight { letter-spacing: -.6px; }
.apple { margin: -4px 0 0 44px; }
.status {
  display: grid;
  grid-template-columns: 73px 42px 101px 80px 80px 68px 57px 91px 42px 138px 71px 64px 67px 191px 76px 63px 63px 59px 150px auto;
  align-items: center;
}
.mem { font-weight: 400; letter-spacing: .5px; }
.menubar .small { font-size: 21.5px; padding: 0; }
.datebadge {
  width: 150px;
  height: 32px;
  border-radius: 4px;
  background: #eae9ea;
  color: #3f3741;
  font-size: 23.5px;
  line-height: 31px;
  letter-spacing: -.74px;
  text-align: center;
  text-shadow: none;
}
.time { letter-spacing: .5px; }

/* browser window */
.window {
  height: 2050px;
  margin-top: 2px;
  flex: none;
  display: flex;
  flex-direction: column;
  overflow: hidden;
  border-radius: 20px;
  border-top: 2px solid #67686a;
  background: #e9e9e9;
  box-shadow: 0 0 0 1px #050505;
}
.tabstrip {
  height: 82px;
  flex: none;
  display: flex;
  padding-top: 14px;
  background: #202124;
  color: #bdc1c6;
  font-size: 23.5px;
  letter-spacing: .2px;
}
.lights { width: 189px; padding: 15px 0 0 42px; display: flex; gap: 16px; flex: none; }
.lights i { width: 24px; height: 24px; border-radius: 50%; }
.red { background: #ed6a5e; }
.yellow { background: #f5bf4f; }
.green { background: #61c554; }
.tab {
  position: relative;
  width: 266px;
  height: 68px;
  flex: none;
  display: flex;
  align-items: center;
  padding-left: 22px;
}
.tab::after {
  content: "";
  position: absolute;
  right: 0;
  top: 15px;
  width: 2px;
  height: 40px;
  background: #55575b;
}
.tab.last::after { display: none; }
.fav { width: 32px; height: 32px; }
.title {
  width: 142px;
  margin-left: 16px;
  overflow: hidden;
  display: flex;
  align-items: center;
  line-height: 36px;
  -webkit-mask-image: linear-gradient(90deg, #000 95px, transparent 142px);
  mask-image: linear-gradient(90deg, #000 95px, transparent 142px);
}
.x { width: 16px; height: 16px; margin-left: 15px; }
.flag { margin: 0 14px 0 1px; }
.audible .title { width: 97px; -webkit-mask-image: linear-gradient(90deg, #000 60px, transparent 97px); mask-image: linear-gradient(90deg, #000 60px, transparent 97px); }
.last .title { -webkit-mask-image: none; mask-image: none; }
.speaker { margin: 0 2px 0 13px; }
.audible .x { margin-left: 25px; }
.bright { color: #f1f3f4; --hole: #202124; }
.dim { color: #505155; --hole: #35363a; }
.active {
  width: 268px;
  padding-left: 23px;
  border-radius: 16px 16px 0 0;
  background: #35363a;
  color: #fff;
}
.active .x { margin-left: 13px; }
.active::before, .active::after {
  content: "";
  position: absolute;
  top: auto;
  bottom: 0;
  width: 16px;
  height: 16px;
}
.active::before { left: -16px; background: radial-gradient(circle at 0 0, #202124 15.5px, #35363a 16.5px); }
.active::after { right: -16px; background: radial-gradient(circle at 100% 0, #202124 15.5px, #35363a 16.5px); }
.plus { margin: 22px 0 0 31px; }
.tabmenu { margin: 20px 30px 0 auto; }
.pma { font: italic 700 13px Inter, sans-serif; fill: #33356b; stroke: #c8c8dc; stroke-width: 1.5px; paint-order: stroke; letter-spacing: 0; }
.php { font: 700 20px "Liberation Sans", sans-serif; fill: #000; stroke: #e6e6f2; stroke-width: 3px; paint-order: stroke; letter-spacing: 0; }
.yts { font: italic 700 13px Inter, sans-serif; fill: #4f8a2c; letter-spacing: 0; }

.toolbar {
  height: 72px;
  flex: none;
  display: grid;
  grid-template-columns: 65px 64px 57px 2700px 64px 64px 65px 63px 58px 82px auto;
  align-items: center;
  padding-left: 30px;
  background: #35363a;
}
.omnibox {
  width: 2672px;
  height: 56px;
  display: flex;
  align-items: center;
  border-radius: 28px;
  background: #202124;
  padding: 0 21px 0 27px;
}
.url { flex: 1; margin-left: 24px; font-size: 28px; color: #fff; letter-spacing: -.02px; }
.path { color: #8f9195; letter-spacing: .14px; }

.bookmarks {
  height: 66px;
  flex: none;
  display: grid;
  grid-template-columns: 148px 132px 229px 297px 221px 193px 218px 309px 194px 244px 158px 134px 523px 35px 22px auto;
  align-items: center;
  padding: 0 0 9px 28px;
  border-bottom: 2px solid #242528;
  background: #35363a;
  color: #fff;
  font-size: 23.5px;
  letter-spacing: .24px;
}
.mark { display: flex; align-items: center; gap: 17px; }
.mark:first-child { gap: 16px; }
.mark svg { width: 32px; height: 32px; }
.more { margin-left: 1px; }
.divider { width: 2px; height: 32px; background: #5f6064; }

/* page content */
.page {
  flex: 1;
  display: flex;
  flex-direction: column;
  align-items: center;
  padding-top: 63px;
  font-family: "Liberation Sans", Arial, sans-serif;
  color: #000;
}
.logotext { font: 700 194px "Liberation Serif", serif; fill: #231f20; }
.card {
  width: 1400px;
  height: 326px;
  margin-top: 168px;
  overflow: hidden;
  border-radius: 12px;
  background: #fff;
}
.card h1 {
  height: 130px;
  margin: 0;
  padding-left: 50px;
  background: #d5b24a;
  font-size: 36px;
  line-height: 132px;
}
.card p {
  margin: 0;
  padding-left: 60px;
  font-size: 32px;
  line-height: 195px;
}
```
